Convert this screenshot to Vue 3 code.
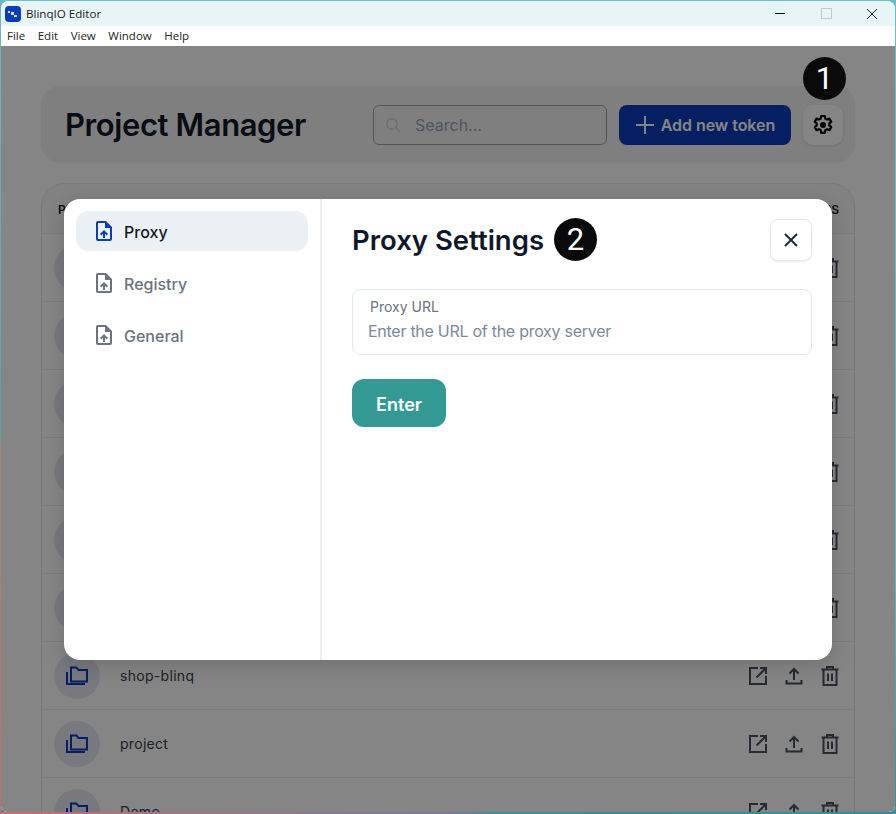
<template>
  <div class="desktop">
    <div class="window">
      <header class="title-bar">
        <div class="app-logo">
          <span class="logo-bit a"></span><span class="logo-bit b"></span><span class="logo-bit c"></span>
        </div>
        <span class="app-name">BlinqIO Editor</span>
        <div class="win-controls">
          <span class="win-btn"><i class="win-min"></i></span>
          <span class="win-btn"><i class="win-max"></i></span>
          <span class="win-btn">
            <svg width="12" height="12" viewBox="0 0 12 12"><path d="M1 1l10 10M11 1L1 11" stroke="#1a1a1a" stroke-width="1" fill="none" /></svg>
          </span>
        </div>
      </header>
      <nav class="menu-bar">
        <span v-for="item in menus" :key="item">{{ item }}</span>
      </nav>

      <main class="content">
        <div class="page">
          <section class="top-card">
            <h1>Project Manager</h1>
            <div class="top-actions">
              <label class="search">
                <svg width="18" height="18" viewBox="0 0 24 24" fill="none" stroke="#cbd5e1" stroke-width="2"><circle cx="10.5" cy="10.5" r="7" /><path d="M16 16l5.5 5.5" /></svg>
                <span>Search...</span>
              </label>
              <button class="add-btn">
                <svg width="20" height="20" viewBox="0 0 20 20"><path d="M10 1v18M1 10h18" stroke="currentColor" stroke-width="2" fill="none" /></svg>
                Add new token
              </button>
              <button class="gear-btn">
                <svg width="24" height="24" viewBox="0 0 24 24" fill="none" stroke="#0b0b0b" stroke-width="2.200" stroke-linejoin="round">
                  <path d="M10.200 3h3.600l.5 2.600 1.700.9 2.500-.9 1.800 3.100-2 1.700v1.900l2 1.700-1.800 3.100-2.500-.9-1.700.9-.5 2.800h-3.600l-.5-2.800-1.700-.9-2.500.9-1.800-3.100 2-1.700v-1.900l-2-1.700 1.800-3.100 2.500.9 1.700-.9z" />
                  <circle cx="12" cy="12" r="3" fill="#0b0b0b" stroke="none" />
                </svg>
              </button>
            </div>
          </section>

          <section class="table-card">
            <div class="table-head">
              <span>PROJECT NAME</span>
              <span>ACTIONS</span>
            </div>
            <div v-for="(row, index) in rows" :key="index" class="table-row">
              <div class="folder-circle">
                <svg width="24" height="24" viewBox="0 0 24 24" fill="none" stroke="#0a3cbc" stroke-width="2">
                  <path d="M2 8v12h18" />
                  <path d="M6 3.500h5.500l2 2.500H22v11.500H6z" />
                </svg>
              </div>
              <span class="row-name">{{ row }}</span>
              <div class="row-actions">
                <svg width="24" height="24" viewBox="0 0 24 24" fill="none" stroke="#4b5160" stroke-width="2">
                  <path d="M12 4H4v16h16v-8" /><path d="M14 4h6v6M20 4l-9.500 9.500" />
                </svg>
                <svg width="24" height="24" viewBox="0 0 24 24" fill="none" stroke="#4b5160" stroke-width="2">
                  <path d="M12 16V5M7.500 9.500L12 5l4.500 4.500" /><path d="M4.500 16v3.500h15V16" />
                </svg>
                <svg width="24" height="24" viewBox="0 0 24 24" fill="none" stroke="#4b5160" stroke-width="2">
                  <path d="M3.500 5.500h17M9 5.500V3h6v2.500" /><path d="M5.500 5.500V21h13V5.500" /><path d="M10 9.500v7.500M14 9.500v7.500" />
                </svg>
              </div>
            </div>
          </section>
        </div>

        <div class="overlay">
          <div class="modal">
            <aside class="modal-side">
              <div v-for="(tab, index) in tabs" :key="tab" :class="['tab', { active: index === 0 }]">
                <svg width="24" height="24" viewBox="0 0 24 24" fill="currentColor">
                  <path d="M14 2H6c-1.100 0-1.990.9-1.990 2L4 20c0 1.100.89 2 1.990 2H18c1.100 0 2-.9 2-2V8l-6-6zm4 18H6V4h7v5h5v11zM8 15.010l1.410 1.410L11 14.840V19h2v-4.160l1.590 1.590L16 15.010 12.010 11 8 15.010z" />
                </svg>
                <span>{{ tab }}</span>
              </div>
            </aside>
            <div class="modal-main">
              <div class="modal-head">
                <h2>Proxy Settings</h2>
                <span class="badge">2</span>
                <button class="close-btn">
                  <svg width="16" height="16" viewBox="0 0 16 16"><path d="M2 2l12 12M14 2L2 14" stroke="#1e293b" stroke-width="2" fill="none" /></svg>
                </button>
              </div>
              <div class="field">
                <label>Proxy URL</label>
                <input type="text" placeholder="Enter the URL of the proxy server" />
              </div>
              <button class="enter-btn">Enter</button>
            </div>
          </div>
        </div>

        <span class="badge badge-gear">1</span>
      </main>
    </div>
  </div>
</template>

<script setup>
const menus = ['File', 'Edit', 'View', 'Window', 'Help']
const tabs = ['Proxy', 'Registry', 'General']
const rows = ['', '', '', '', '', '', 'shop-blinq', 'project', 'Demo']
</script>

<style>
html,
body {
  margin: 0;
  height: 100%;
  overflow: hidden;
}
</style>

<style scoped>
/* the desktop wallpaper only peeks out along the window edge */
.desktop {
  height: 814px;
  padding: 1px 1px 2px;
  box-sizing: border-box;
  background:
    linear-gradient(180deg, #6cb8c0 0, #5f9fa6 443px, #a08a80 444px, #cc6a70 100%) left top / 1px 100% no-repeat,
    linear-gradient(90deg, #cc6a70 0, #8a7a90 35%, #7a7a98 50%, #3f9096 55%, #2f8f9c 100%) left bottom / 100% 2px no-repeat,
    linear-gradient(180deg, #6cbcc4 0, #69b3bd 70%, #3f8a9c 100%);
}

.window {
  height: 100%;
  border-radius: 8px 8px 6px 6px;
  overflow: hidden;
  display: flex;
  flex-direction: column;
  background: #fff;
}

.title-bar {
  height: 25px;
  flex: none;
  display: flex;
  align-items: center;
  background: #e8f5f8;
  padding-left: 4px;
}

.app-logo {
  width: 16px;
  height: 16px;
  border-radius: 4px;
  background: #0a3cbc;
  position: relative;
}

.logo-bit {
  position: absolute;
  background: #d8def5;
}

.logo-bit.a { left: 3px; top: 5px; width: 2px; height: 2px; }
.logo-bit.b { left: 6px; top: 6px; width: 3px; height: 3px; }
.logo-bit.c { left: 9px; top: 9px; width: 3px; height: 2px; }

.app-name {
  margin-left: 5px;
  font: 11.600px "Open Sans", "Liberation Sans", sans-serif;
  color: #1a1a1a;
}

.win-controls {
  margin-left: auto;
  display: flex;
}

.win-btn {
  width: 46px;
  height: 25px;
  display: flex;
  align-items: center;
  justify-content: center;
}

.win-min {
  width: 10px;
  height: 1px;
  background: #111;
}

.win-max {
  width: 9px;
  height: 9px;
  border: 1px solid #c4c9cc;
}

.menu-bar {
  height: 20px;
  flex: none;
  box-sizing: border-box;
  padding: 0 0 2px 6px;
  display: flex;
  align-items: center;
  gap: 12.500px;
  background: #fff;
  font: 11.500px "Open Sans", "Liberation Sans", sans-serif;
  color: #222;
}

.content {
  flex: 1;
  min-height: 0;
  position: relative;
  overflow: hidden;
  background: #fff;
}

.page {
  padding: 40px 40px 0;
  font-family: Inter, "Liberation Sans", sans-serif;
}

.top-card {
  height: 77px;
  box-sizing: border-box;
  padding: 0 12px 0 24px;
  border-radius: 20px;
  background: #f4f4f5;
  display: flex;
  align-items: center;
  justify-content: space-between;
}

h1 {
  margin: 0;
  font-size: 31px;
  font-weight: 600;
  color: #111827;
  letter-spacing: -0.4px;
}

.top-actions {
  display: flex;
  align-items: center;
  gap: 12px;
}

.search {
  width: 234px;
  height: 40px;
  box-sizing: border-box;
  border: 1px solid #9ca3af;
  border-radius: 6px;
  background: #f4f4f5;
  display: flex;
  align-items: center;
  gap: 13px;
  padding-left: 10px;
  font-size: 16px;
  color: #94a3b8;
}

.add-btn {
  width: 172px;
  height: 40px;
  border: 0;
  border-radius: 8px;
  background: #0a3cbc;
  color: #fff;
  font: 600 16px Inter, "Liberation Sans", sans-serif;
  display: flex;
  align-items: center;
  justify-content: center;
  gap: 6px;
  letter-spacing: -0.05px;
}

.gear-btn {
  width: 40px;
  height: 40px;
  border: 0;
  border-radius: 10px;
  background: #fff;
  box-shadow: 0 1px 3px rgba(0, 0, 0, 0.12);
  display: flex;
  align-items: center;
  justify-content: center;
  padding: 0;
}

.table-card {
  margin-top: 20px;
  border: 1px solid #e5e7eb;
  border-radius: 24px;
  background: #fff;
}

.table-head {
  height: 49px;
  display: flex;
  align-items: center;
  justify-content: space-between;
  padding: 1px 15px 0 16px;
  box-sizing: border-box;
  font-size: 12px;
  font-weight: 600;
  color: #111827;
  background: #f9fafb;
  border-radius: 24px 24px 0 0;
}

.table-row {
  height: 68px;
  box-sizing: border-box;
  border-top: 1px solid #eceef1;
  display: flex;
  align-items: center;
  padding: 0 12px;
}

.folder-circle {
  width: 46px;
  height: 46px;
  border-radius: 50%;
  background: #e6e7f4;
  display: flex;
  align-items: center;
  justify-content: center;
}

.row-name {
  margin-left: 20px;
  font-size: 14px;
  letter-spacing: 0.3px;
  color: #374151;
}

.row-actions {
  margin-left: auto;
  display: flex;
  gap: 12px;
}

.overlay {
  position: absolute;
  inset: 0;
  background: rgba(0, 0, 0, 0.48);
  display: flex;
  align-items: center;
  justify-content: center;
  font-family: Inter, "Liberation Sans", sans-serif;
}

.modal {
  width: 768px;
  height: 461px;
  border-radius: 16px;
  background: #fff;
  display: flex;
  box-shadow: 0 6px 20px rgba(0, 0, 0, 0.15);
}

.modal-side {
  width: 258px;
  flex: none;
  box-sizing: border-box;
  border-right: 2px solid #eeeeee;
  padding: 12px;
  display: flex;
  flex-direction: column;
  gap: 12px;
}

.tab {
  height: 40px;
  border-radius: 12px;
  display: flex;
  align-items: center;
  gap: 8px;
  padding-left: 16px;
  color: #6b7280;
  font-size: 16px;
  font-weight: 500;
}

.tab svg {
  flex: none;
}

.tab span {
  padding-top: 2px;
}

.tab.active {
  background: #ecf1f6;
  color: #111827;
}

.tab.active svg {
  color: #0a3cbc;
}

.modal-main {
  flex: 1;
  padding: 20px 20px 0 30px;
}

.modal-head {
  height: 42px;
  display: flex;
  align-items: center;
}

h2 {
  margin: 0;
  font-size: 27.500px;
  font-weight: 600;
  color: #0f172a;
}

.badge {
  width: 43px;
  height: 43px;
  border-radius: 50%;
  background: #0a0a0a;
  color: #fff;
  font: 31px Roboto, "Liberation Sans", sans-serif;
  display: flex;
  align-items: center;
  justify-content: center;
  flex: none;
  margin-left: 10px;
}

.badge-gear {
  position: absolute;
  top: 11px;
  left: 802px;
  margin: 0;
}

.close-btn {
  margin-left: auto;
  width: 42px;
  height: 42px;
  padding: 0;
  border: 1px solid #e5e7eb;
  border-radius: 8px;
  background: #fff;
  box-shadow: 0 1px 3px rgba(0, 0, 0, 0.08);
  display: flex;
  align-items: center;
  justify-content: center;
}

.field {
  margin-top: 28px;
  height: 66px;
  box-sizing: border-box;
  border: 1px solid #e2e8f0;
  border-radius: 8px;
  padding: 8px 15px 0;
  display: flex;
  flex-direction: column;
}

.field label {
  font-size: 14px;
  line-height: 17px;
  color: #6b7280;
  padding-left: 2px;
}

.field input {
  margin-top: 4px;
  border: 0;
  outline: 0;
  padding: 0;
  height: 24px;
  font: 16px Inter, "Liberation Sans", sans-serif;
  letter-spacing: -0.27px;
}

.field input::placeholder {
  color: #7c889b;
  opacity: 1;
}

.enter-btn {
  margin-top: 24px;
  display: block;
  width: 94px;
  height: 48px;
  padding: 3px 0 0;
  border: 0;
  border-radius: 12px;
  background: #329a92;
  color: #fff;
  font: 600 18px Inter, "Liberation Sans", sans-serif;
}
</style>
